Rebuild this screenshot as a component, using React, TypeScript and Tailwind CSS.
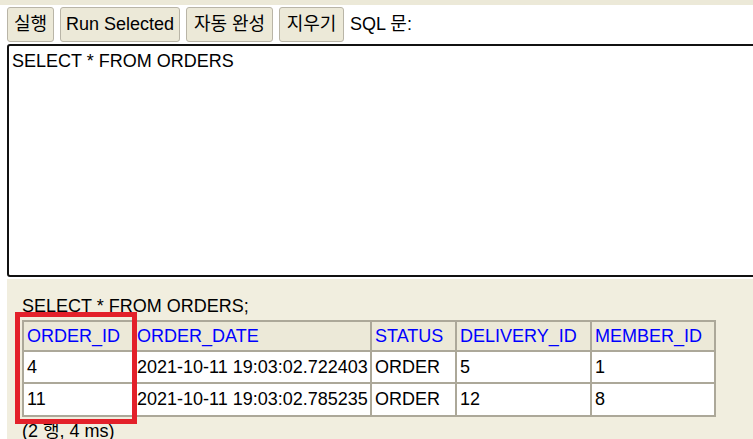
import React from "react";

const font = { fontFamily: '"Liberation Sans", "Noto Sans CJK KR", Arial, sans-serif' };

const cols = ["ORDER_ID", "ORDER_DATE", "STATUS", "DELIVERY_ID", "MEMBER_ID"];
const rows = [
  ["4", "2021-10-11 19:03:02.722403", "ORDER", "5", "1"],
  ["11", "2021-10-11 19:03:02.785235", "ORDER", "12", "8"],
];

function Btn({ children, w }: { children: React.ReactNode; w: string }) {
  return (
    <div className={"h-[35px] flex items-center justify-center border border-[#b9b5a7] rounded-[3px] bg-[#ece9d8] text-black whitespace-nowrap " + w}>
      {children}
    </div>
  );
}

export default function App() {
  return (
    <div className="relative w-[753px] h-[439px] overflow-hidden bg-white text-[18px] leading-[21px] text-black" style={font}>
      <div className="h-[5px] bg-[#ece9d8]" />
      <div className="flex items-center gap-[6px] pl-[7px] pt-[2px]">
        <Btn w="w-[47px]">실행</Btn>
        <Btn w="w-[120px]">Run Selected</Btn>
        <Btn w="w-[87px]">자동 완성</Btn>
        <Btn w="w-[65px]">지우기</Btn>
        <span className="whitespace-nowrap">SQL 문:</span>
      </div>
      <div className="pl-[7px] pt-[2px]">
        <div className="w-[770px] h-[233px] border-2 border-[#111] rounded-[3px] pl-[3px] pt-[5px] whitespace-nowrap">
          SELECT * FROM ORDERS
        </div>
      </div>
      <div className="mt-[2px] ml-[7px] h-[200px] bg-[#f1eedf] pl-[15px] pt-[17px]">
        <div className="whitespace-nowrap">SELECT * FROM ORDERS;</div>
        <div className="mt-[3px] w-[694px] grid grid-cols-[110px_238px_85px_135px_124px] border-l-2 border-t-2 border-[#aca899]">
          {cols.map((c) => (
            <div key={c} className="h-[30px] flex items-center pl-[3px] border-r-2 border-b-2 border-[#aca899] bg-[#ece9d8] text-[#0000ff] whitespace-nowrap">
              {c}
            </div>
          ))}
          {rows.map((r, i) =>
            r.map((v, j) => (
              <div key={i + "-" + j} className={"flex items-center pl-[3px] border-r-2 border-b-2 border-[#aca899] bg-white whitespace-nowrap " + (i === 0 ? "h-[32px]" : "h-[33px]")}>
                {v}
              </div>
            ))
          )}
        </div>
        <div className="mt-[4px] whitespace-nowrap">(2 행, 4 ms)</div>
      </div>
      <div className="absolute left-[15px] top-[312px] w-[122px] h-[112px] border-[5px] border-[#e3202a]" />
    </div>
  );
}
